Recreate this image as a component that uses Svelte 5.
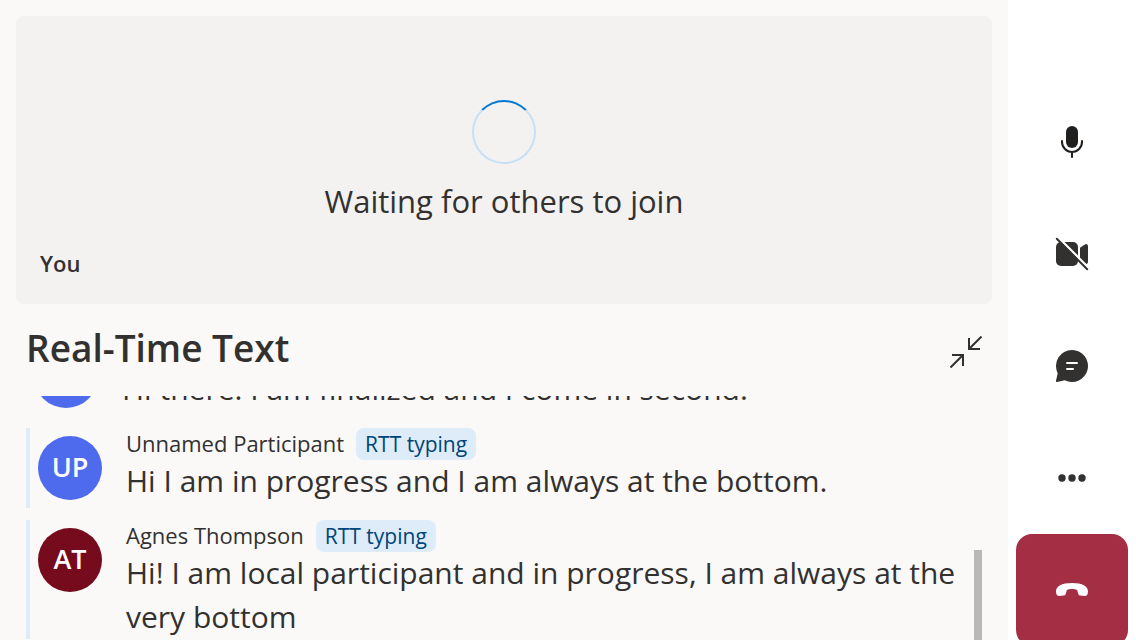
<script>
  const messages = [
    { id: 1, name: '', initials: '', color: '#4f6bed', text: 'Hi there! I am finalized and I come in second.', typing: false },
    { id: 2, name: 'Unnamed Participant', initials: 'UP', color: '#4f6bed', text: 'Hi I am in progress and I am always at the bottom.', typing: true },
    { id: 3, name: 'Agnes Thompson', initials: 'AT', color: '#750b1c', text: 'Hi! I am local participant and in progress, I am always at the very bottom', typing: true }
  ];

  let list;

  // Open the caption list scrolled towards the newest messages.
  $effect(() => {
    list.scrollTop = 60;
  });
</script>

<div class="call">
  <main>
    <section class="tile" aria-label="Your video">
      <div class="waiting">
        <div class="spinner"></div>
        <p class="status">Waiting for others to join</p>
      </div>
      <span class="you">You</span>
    </section>

    <section class="rtt">
      <header>
        <h1>Real-Time Text</h1>
        <button class="collapse" aria-label="Collapse">
          <svg viewBox="0 0 32 32" width="32" height="32" fill="none" stroke="#323130" stroke-width="2">
            <path d="M31.5.5 19 13M19 2v11h11M.5 31.5 13 19M2 19h11v11" />
          </svg>
        </button>
      </header>

      <div class="viewport">
        <ul bind:this={list}>
          {#each messages as m (m.id)}
            <li class:typing={m.typing}>
              <span class="avatar" style:background={m.color}>{m.initials}</span>
              <div class="body">
                <div class="meta">
                  {#if m.name}<span class="name">{m.name}</span>{/if}
                  {#if m.typing}<span class="tag">RTT typing</span>{/if}
                </div>
                <p>{m.text}</p>
              </div>
            </li>
          {/each}
        </ul>
        <div class="thumb"></div>
      </div>
    </section>
  </main>

  <nav aria-label="Call controls">
    <button aria-label="Mute">
      <svg viewBox="0 0 20 20" width="40" height="40" fill="none" stroke="#201f1e" stroke-linecap="round">
        <rect x="7" y="2" width="6" height="11" rx="3" fill="#201f1e" stroke="none" />
        <path d="M5 9.5v.5a5 5 0 0 0 10 0v-.5M10 15v2.5" />
      </svg>
    </button>
    <button aria-label="Turn on camera">
      <svg viewBox="0 0 20 20" width="40" height="40" fill="#323130">
        <rect x="2" y="4" width="11" height="12" rx="2.5" />
        <path d="M14 6.9l2.4-1.7A1 1 0 0 1 18 6v8a1 1 0 0 1-1.6.8L14 13.1z" />
        <path d="M3.2 1.8 18.4 17" stroke="#fff" stroke-width="1.2" />
        <path d="m2.4 2.4 15.2 15.2" stroke="#323130" stroke-linecap="round" />
      </svg>
    </button>
    <button aria-label="Chat">
      <svg viewBox="0 0 20 20" width="40" height="40" fill="#323130">
        <path d="M10 2a8 8 0 1 1-3.6 15.15l-3.8.84a.5.5 0 0 1-.6-.6l.85-3.8A8 8 0 0 1 10 2z" />
        <path d="M7.5 8.5h5M7.5 11.5h3" stroke="#fff" stroke-linecap="round" />
      </svg>
    </button>
    <button aria-label="More">
      <svg viewBox="0 0 20 20" width="40" height="40" fill="#323130">
        <circle cx="5" cy="10" r="1.85" /><circle cx="10" cy="10" r="1.85" /><circle cx="15" cy="10" r="1.85" />
      </svg>
    </button>
    <button class="leave" aria-label="Leave">
      <svg viewBox="0 0 20 20" width="40" height="40" fill="#fff">
        <path d="M10 6.5c5.2 0 8 1.700 8 4.200 0 1.600-.7 2.400-1.800 2.300l-1.900-.2c-.7-.1-1.100-.5-1.300-1.200l-.4-1.600c-.8-.4-1.600-.5-2.600-.5s-1.800.1-2.600.5L7 11.600c-.2.7-.6 1.100-1.300 1.200l-1.900.2C2.700 13.100 2 12.300 2 10.700 2 8.200 4.800 6.500 10 6.500z" />
      </svg>
    </button>
  </nav>
</div>

<style>
  :global(body) {
    margin: 0;
  }

  .call {
    display: flex;
    height: 100vh;
    overflow: hidden;
    background: #faf9f8;
    color: #323130;
    font-family: 'Segoe UI', 'Open Sans', sans-serif;
  }

  main {
    flex: 1;
    min-width: 0;
    display: flex;
    flex-direction: column;
    padding: 16px 16px 0;
  }

  .tile {
    flex: none;
    display: grid;
    grid-template-rows: 288px;
    border-radius: 8px;
    background: #f3f2f1;
  }

  .waiting,
  .you {
    grid-area: 1 / 1;
  }

  .waiting {
    display: flex;
    flex-direction: column;
    align-items: center;
    align-self: center;
    gap: 18px;
  }

  .spinner {
    box-sizing: border-box;
    width: 64px;
    height: 64px;
    border: 2px solid #c7e0f4;
    border-top-color: #0078d4;
    border-radius: 50%;
  }

  p {
    margin: 0;
    font-size: 30px;
    line-height: 44px;
  }

  .status {
    font-size: 31px;
    line-height: 38px;
  }

  .you {
    align-self: end;
    padding: 24px;
    font-size: 22px;
    font-weight: 600;
    line-height: 34px;
  }

  .rtt {
    flex: 1;
    min-height: 0;
    display: flex;
    flex-direction: column;
    padding: 0 10px;
  }

  header {
    flex: none;
    display: flex;
    justify-content: space-between;
    align-items: flex-start;
    height: 92px;
  }

  h1 {
    margin: 0;
    font-size: 37px;
    font-weight: 600;
    line-height: 88px;
  }

  .collapse {
    margin-top: 32px;
  }

  button {
    display: flex;
    align-items: center;
    justify-content: center;
    padding: 0;
    border: 0;
    background: none;
  }

  .viewport {
    position: relative;
    flex: 1;
    min-height: 0;
  }

  ul {
    box-sizing: border-box;
    height: 100%;
    margin: 0;
    padding: 0 0 48px;
    overflow: hidden;
    list-style: none;
  }

  li {
    display: flex;
    gap: 24px;
    min-height: 80px;
    margin-bottom: 12px;
    padding: 0 16px 0 8px;
  }

  .typing {
    border-left: 4px solid #deecf9;
  }

  .avatar {
    flex: none;
    width: 64px;
    height: 64px;
    margin-top: 8px;
    border-radius: 50%;
    color: #fff;
    font-size: 27px;
    font-weight: 600;
    line-height: 62px;
    text-align: center;
  }

  .meta {
    display: flex;
    gap: 12px;
    height: 32px;
    margin-bottom: -1px;
    font-size: 22px;
    line-height: 30px;
  }

  .tag {
    padding: 0 9px;
    border-radius: 8px;
    background: #deecf9;
    color: #004578;
    font-size: 21px;
    line-height: 32px;
  }

  .thumb {
    position: absolute;
    top: 154px;
    right: 0;
    bottom: 0;
    width: 8px;
    background: #bab9b8;
  }

  nav {
    flex: none;
    box-sizing: border-box;
    width: 128px;
    padding: 86px 8px 0;
    background: #fff;
  }

  nav button {
    width: 100%;
    height: 112px;
  }

  .leave {
    border-radius: 16px;
    background: #a42e43;
  }
</style>
